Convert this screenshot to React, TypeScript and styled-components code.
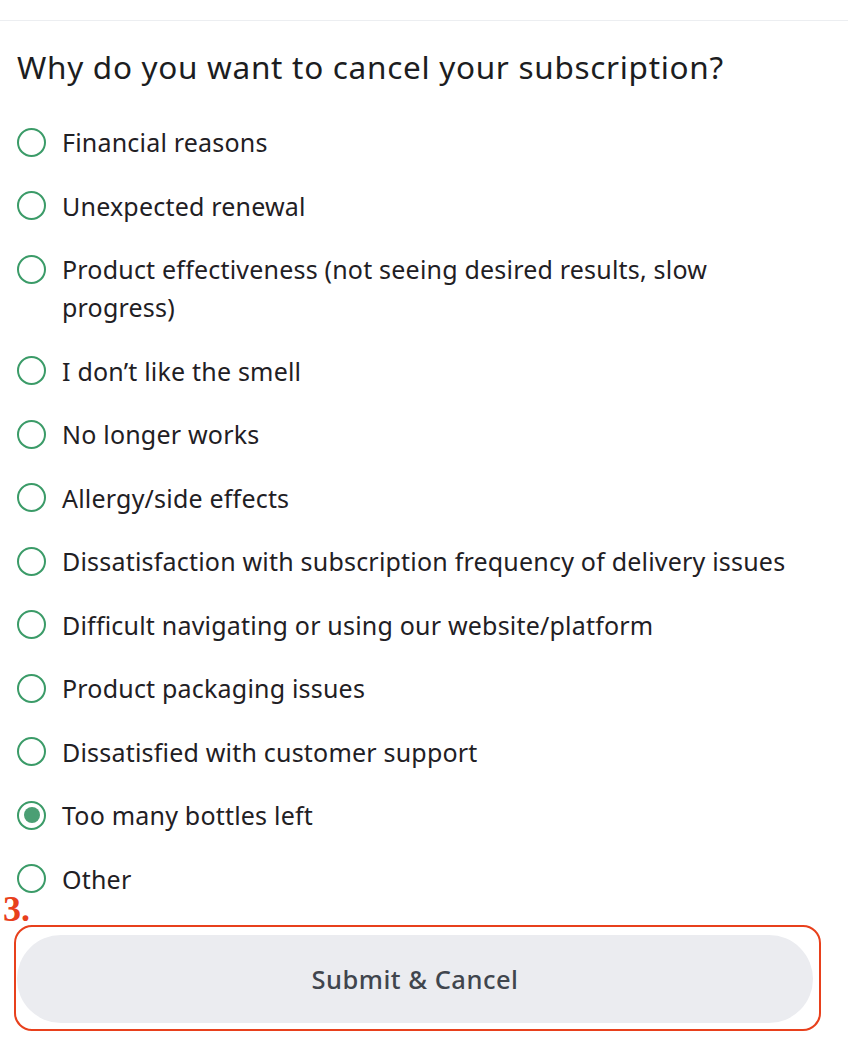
import React, { useState } from "react";
import styled, { createGlobalStyle } from "styled-components";

const GlobalStyle = createGlobalStyle`
    html, body {
        margin: 0;
        padding: 0;
        background: #ffffff;
    }
    body {
        font-family: "Noto Sans", "Open Sans", sans-serif;
        color: #1f2024;
    }
`;

const REASONS = [
    "Financial reasons",
    "Unexpected renewal",
    "Product effectiveness (not seeing desired results, slow progress)",
    "I don’t like the smell",
    "No longer works",
    "Allergy/side effects",
    "Dissatisfaction with subscription frequency of delivery issues",
    "Difficult navigating or using our website/platform",
    "Product packaging issues",
    "Dissatisfied with customer support",
    "Too many bottles left",
    "Other",
];

// Page frame with the thin divider along the top
const Page = styled.main`
    position: relative;
    margin-top: 20px;
    border-top: 1px solid #eceef1;
    padding: 0 0 8px;
`;

const Title = styled.h2`
    margin: 26px 0 0 17px;
    font-size: 31.5px;
    line-height: 40px;
    font-weight: 400;
    letter-spacing: 0.7px;
    color: #1c1d21;
`;

const OptionList = styled.div`
    display: flex;
    flex-direction: column;
    gap: 25.5px;
    margin: 36px 0 0 17px;
    width: 780px;
`;

const OptionRow = styled.label`
    display: flex;
    align-items: flex-start;
    gap: 16px;
    cursor: pointer;
`;

const Radio = styled.span<{ $checked: boolean }>`
    flex: none;
    box-sizing: border-box;
    width: 29px;
    height: 29px;
    margin-top: 4.5px;
    border-radius: 50%;
    border: 2.7px solid #3b9b68;
    display: flex;
    align-items: center;
    justify-content: center;

    &::after {
        content: "";
        width: 16px;
        height: 16px;
        border-radius: 50%;
        background: #4b9f74;
        display: ${({ $checked }) => ($checked ? "block" : "none")};
    }
`;

const HiddenInput = styled.input`
    position: absolute;
    opacity: 0;
    pointer-events: none;
`;

const OptionText = styled.span`
    font-size: 25px;
    line-height: 38px;
    letter-spacing: 0.2px;
    color: #1f2024;
`;

const StepMark = styled.span`
    position: absolute;
    left: 3px;
    top: 870px;
    font-family: "Liberation Serif", "DejaVu Serif", serif;
    font-weight: 700;
    font-size: 36px;
    line-height: 36px;
    color: #e8401c;
`;

const Highlight = styled.div`
    box-sizing: border-box;
    margin: 27px 0 0 14px;
    width: 807px;
    padding: 8px 6px 6px 1px;
    border: 2.5px solid #e8401c;
    border-radius: 18px;
`;

const SubmitButton = styled.button`
    display: block;
    width: 100%;
    height: 88px;
    border: none;
    border-radius: 44px;
    background: #ebecf0;
    font-family: "Noto Sans", "Open Sans", sans-serif;
    font-size: 25.5px;
    font-weight: 500;
    letter-spacing: 0.5px;
    color: #40454d;
    cursor: pointer;
`;

export default function App() {
    const [selected, setSelected] = useState("Too many bottles left");

    return (
        <>
            <GlobalStyle />
            <Page>
                <Title>Why do you want to cancel your subscription?</Title>
                <OptionList role="radiogroup">
                    {REASONS.map((reason) => (
                        <OptionRow key={reason}>
                            <HiddenInput
                                type="radio"
                                name="reason"
                                checked={selected === reason}
                                onChange={() => setSelected(reason)}
                            />
                            <Radio $checked={selected === reason} />
                            <OptionText>{reason}</OptionText>
                        </OptionRow>
                    ))}
                </OptionList>
                <StepMark>3.</StepMark>
                <Highlight>
                    <SubmitButton type="button">Submit &amp; Cancel</SubmitButton>
                </Highlight>
            </Page>
        </>
    );
}
